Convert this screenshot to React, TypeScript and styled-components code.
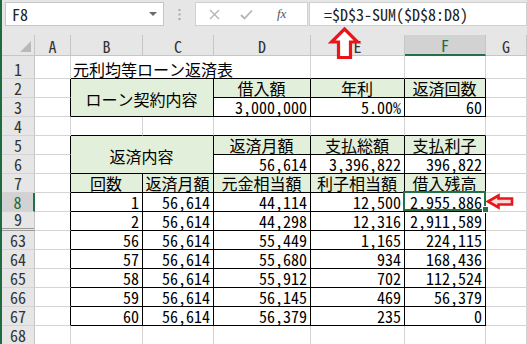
import React from "react";
import styled, { createGlobalStyle } from "styled-components";

const FONT = `"Noto Sans Mono CJK JP", "Noto Sans CJK JP", "Liberation Sans", sans-serif`;

const Global = createGlobalStyle`
  html, body { margin: 0; padding: 0; background: #fff; }
  body { font-family: ${FONT}; }
`;

const Window = styled.div`
  position: relative;
  width: 527px;
  height: 344px;
  overflow: hidden;
  box-sizing: border-box;
  border-left: 2px solid #1d6b3f;
  display: flex;
  flex-direction: column;
  background: #fff;
`;

const FormulaBar = styled.div`
  flex: none;
  height: 35px;
  box-sizing: border-box;
  padding-top: 2px;
  background: #e6e6e6;
  display: flex;
  align-items: flex-start;
`;

const NameBox = styled.div`
  margin-left: 3px;
  width: 159px;
  height: 24px;
  box-sizing: border-box;
  border: 1px solid #c6c6c6;
  background: #fff;
  display: flex;
  align-items: center;
  justify-content: space-between;
  padding: 0 6px;
  font-size: 16px;
  color: #222;
`;

const Caret = styled.span`
  width: 0;
  height: 0;
  border-left: 4px solid transparent;
  border-right: 4px solid transparent;
  border-top: 4px solid #6a6a6a;
`;

const Grip = styled.div`
  width: 31px;
  height: 24px;
  display: flex;
  align-items: center;
  justify-content: center;
`;

const EditBox = styled.div`
  width: 113px;
  height: 24px;
  box-sizing: border-box;
  border: 1px solid #d0d0d0;
  background: #fff;
  display: flex;
  align-items: center;
  padding-left: 13px;
  gap: 20px;
`;

const Fx = styled.span`
  font-family: "Liberation Serif", serif;
  font-style: italic;
  font-size: 13px;
  color: #555;
  margin-left: 4px;
`;

const FormulaInput = styled.div`
  flex: 1;
  height: 24px;
  box-sizing: border-box;
  margin-left: 1px;
  border: 1px solid #d0d0d0;
  background: #fff;
  display: flex;
  align-items: center;
  padding-left: 14px;
  font-size: 16px;
  color: #222;
  white-space: nowrap;
`;

const Sheet = styled.div`
  display: grid;
  grid-template-columns: 33px 36px 72px 71px 97px 94px 81px 1fr;
  grid-template-rows: 21px 23px repeat(14, 19px);
`;

const Corner = styled.div`
  grid-column: 1;
  grid-row: 1;
  box-sizing: border-box;
  background: #e6e6e6;
  border-right: 1px solid #c6c6c6;
  border-bottom: 1px solid #c6c6c6;
  display: flex;
  align-items: flex-end;
  justify-content: flex-end;
  padding: 0 3px 3px 0;
`;

const CornerTriangle = styled.span`
  width: 0;
  height: 0;
  border-left: 11px solid transparent;
  border-bottom: 11px solid #b9b9b9;
`;

const ColHead = styled.div<{ $col: number; $sel?: boolean }>`
  grid-column: ${(p) => p.$col};
  grid-row: 1;
  box-sizing: border-box;
  background: ${(p) => (p.$sel ? "#d2d2d2" : "#e6e6e6")};
  border-right: 1px solid #c6c6c6;
  border-bottom: ${(p) => (p.$sel ? "2px solid #217346" : "1px solid #c6c6c6")};
  color: ${(p) => (p.$sel ? "#1e6b3f" : "#333")};
  font-size: 16px;
  display: flex;
  align-items: center;
  justify-content: center;
  padding-top: 1px;
`;

const RowHead = styled.div<{ $row: number; $sel?: boolean; $gap?: boolean }>`
  grid-column: 1;
  grid-row: ${(p) => p.$row};
  box-sizing: border-box;
  background: ${(p) => (p.$sel ? "#d2d2d2" : "#e6e6e6")};
  border-right: ${(p) => (p.$sel ? "2px solid #217346" : "1px solid #c6c6c6")};
  border-bottom: ${(p) => (p.$gap ? "3px double #9a9a9a" : "1px solid #d4d4d4")};
  color: ${(p) => (p.$sel ? "#1e6b3f" : "#333")};
  font-size: 16px;
  line-height: 18px;
  display: flex;
  align-items: flex-end;
  justify-content: center;
`;

const Cell = styled.div<{
  $row: number;
  $col: number;
  $cs: number;
  $rs: number;
  $r: string;
  $b: string;
  $fill?: boolean;
  $align: "left" | "center" | "right";
  $mid?: boolean;
}>`
  grid-column: ${(p) => p.$col} / span ${(p) => p.$cs};
  grid-row: ${(p) => p.$row} / span ${(p) => p.$rs};
  position: relative;
  box-sizing: border-box;
  border-right: 1px solid ${(p) => p.$r};
  border-bottom: 1px solid ${(p) => p.$b};
  background: ${(p) => (p.$fill ? "#e2efda" : "#fff")};
  display: flex;
  align-items: ${(p) => (p.$mid ? "center" : "flex-end")};
  justify-content: ${(p) =>
    p.$align === "left" ? "flex-start" : p.$align === "right" ? "flex-end" : "center"};
  padding: ${(p) => (p.$mid ? "3px 3px 0 2px" : "0 3px 0 2px")};
  font-size: 16px;
  line-height: 18px;
  color: #000;
  white-space: nowrap;
`;

const Selection = styled.div`
  position: absolute;
  top: -2px;
  left: -2px;
  right: -1px;
  bottom: 0;
  border: 2px solid #217346;
  z-index: 2;
  pointer-events: none;
`;

const Handle = styled.div`
  position: absolute;
  right: -5px;
  bottom: -4px;
  width: 5px;
  height: 5px;
  background: #217346;
  border: 1px solid #fff;
`;

const Marker = styled.svg<{ $x: number; $y: number }>`
  position: absolute;
  left: ${(p) => p.$x}px;
  top: ${(p) => p.$y}px;
  z-index: 5;
  overflow: visible;
`;

type Align = "left" | "center" | "right";
type Spec = { t: string; a: Align; fill?: boolean; cs?: number; rs?: number; mid?: boolean };

const ROWS = [1, 2, 3, 4, 5, 6, 7, 8, 9, 63, 64, 65, 66, 67, 68];
const COLS = ["A", "B", "C", "D", "E", "F", "G"];

const inTable = (r: number, c: number) =>
  c >= 2 && c <= 6 && (r === 2 || r === 3 || (r >= 5 && r <= 9) || (r >= 63 && r <= 67));

const cells: Record<string, Spec> = {};
const put = (r: number, c: number, s: Spec) => {
  cells[`${r}-${c}`] = s;
};
const covered = new Set<string>(["2-3", "3-2", "3-3", "5-3", "6-2", "6-3", "1-3", "1-4"]);

put(1, 2, { t: "元利均等ローン返済表", a: "left", cs: 3 });
put(2, 2, { t: "ローン契約内容", a: "center", fill: true, cs: 2, rs: 2, mid: true });
put(2, 4, { t: "借入額", a: "center", fill: true });
put(2, 5, { t: "年利", a: "center", fill: true });
put(2, 6, { t: "返済回数", a: "center", fill: true });
put(3, 4, { t: "3,000,000", a: "right" });
put(3, 5, { t: "5.00%", a: "right" });
put(3, 6, { t: "60", a: "right" });
put(5, 2, { t: "返済内容", a: "center", fill: true, cs: 2, rs: 2, mid: true });
put(5, 4, { t: "返済月額", a: "center", fill: true });
put(5, 5, { t: "支払総額", a: "center", fill: true });
put(5, 6, { t: "支払利子", a: "center", fill: true });
put(6, 4, { t: "56,614", a: "right" });
put(6, 5, { t: "3,396,822", a: "right" });
put(6, 6, { t: "396,822", a: "right" });
["回数", "返済月額", "元金相当額", "利子相当額", "借入残高"].forEach((t, i) =>
  put(7, 2 + i, { t, a: "center", fill: true })
);

const data: Record<number, string[]> = {
  8: ["1", "56,614", "44,114", "12,500", "2,955,886"],
  9: ["2", "56,614", "44,298", "12,316", "2,911,589"],
  63: ["56", "56,614", "55,449", "1,165", "224,115"],
  64: ["57", "56,614", "55,680", "934", "168,436"],
  65: ["58", "56,614", "55,912", "702", "112,524"],
  66: ["59", "56,614", "56,145", "469", "56,379"],
  67: ["60", "56,614", "56,379", "235", "0"],
};
Object.entries(data).forEach(([r, vals]) =>
  vals.forEach((t, i) => put(Number(r), 2 + i, { t, a: "right" }))
);

const GRID = "#d4d4d4";
const INK = "#000";

const UpArrow = () => (
  <Marker $x={327} $y={27} width="31" height="33" viewBox="0 0 31 33">
    <path
      d="M15.5 2 L28.5 15 L21.5 15 L21.5 30.5 L9.5 30.5 L9.5 15 L2.5 15 Z"
      fill="#fff"
      stroke="#e8161b"
      strokeWidth="3.2"
      strokeLinejoin="miter"
    />
  </Marker>
);

const LeftArrow = () => (
  <Marker $x={484} $y={194} width="28" height="15" viewBox="0 0 28 15">
    <path
      d="M2 7.5 L12.5 1.5 L12.5 4.5 L26 4.5 L26 10.5 L12.5 10.5 L12.5 13.5 Z"
      fill="#ffd9d9"
      stroke="#e8161b"
      strokeWidth="2.6"
      strokeLinejoin="miter"
    />
  </Marker>
);

export default function App() {
  const nodes: React.ReactNode[] = [];
  ROWS.forEach((r, i) => {
    const gridRow = i + 2;
    const next = ROWS[i + 1];
    nodes.push(
      <RowHead key={`h${r}`} $row={gridRow} $sel={r === 8} $gap={r === 9}>
        {r}
      </RowHead>
    );
    for (let c = 1; c <= 7; c++) {
      const key = `${r}-${c}`;
      if (covered.has(key)) continue;
      const s = cells[key];
      const cs = s?.cs ?? 1;
      const rs = s?.rs ?? 1;
      const lastC = c + cs - 1;
      const lastR = ROWS[i + rs - 1];
      const below = ROWS[i + rs];
      const right =
        inTable(r, lastC) || inTable(r, lastC + 1) ? INK : GRID;
      const bottom =
        inTable(lastR, c) || (below !== undefined && inTable(below, c)) ? INK : GRID;
      void next;
      nodes.push(
        <Cell
          key={key}
          $row={gridRow}
          $col={c + 1}
          $cs={cs}
          $rs={rs}
          $r={right}
          $b={bottom}
          $fill={s?.fill}
          $align={s?.a ?? "left"}
          $mid={s?.mid}
        >
          {s?.t}
          {r === 8 && c === 6 && (
            <Selection>
              <Handle />
            </Selection>
          )}
        </Cell>
      );
    }
  });

  return (
    <>
      <Global />
      <Window>
        <FormulaBar>
          <NameBox>
            F8
            <Caret />
          </NameBox>
          <Grip>
            <svg width="3" height="11" viewBox="0 0 3 11">
              <rect x="0.5" y="0" width="2" height="2" fill="#a8a8a8" />
              <rect x="0.5" y="4.5" width="2" height="2" fill="#a8a8a8" />
              <rect x="0.5" y="9" width="2" height="2" fill="#a8a8a8" />
            </svg>
          </Grip>
          <EditBox>
            <svg width="11" height="11" viewBox="0 0 11 11">
              <path d="M1 1 L10 10 M10 1 L1 10" stroke="#b4b4b4" strokeWidth="1.4" />
            </svg>
            <svg width="13" height="11" viewBox="0 0 13 11">
              <path d="M1 6 L4.5 9.5 L12 1.5" stroke="#b4b4b4" strokeWidth="1.8" fill="none" />
            </svg>
            <Fx>fx</Fx>
          </EditBox>
          <FormulaInput>=$D$3-SUM($D$8:D8)</FormulaInput>
        </FormulaBar>
        <Sheet>
          <Corner>
            <CornerTriangle />
          </Corner>
          {COLS.map((l, i) => (
            <ColHead key={l} $col={i + 2} $sel={l === "F"}>
              {l}
            </ColHead>
          ))}
          {nodes}
        </Sheet>
        <UpArrow />
        <LeftArrow />
      </Window>
    </>
  );
}
